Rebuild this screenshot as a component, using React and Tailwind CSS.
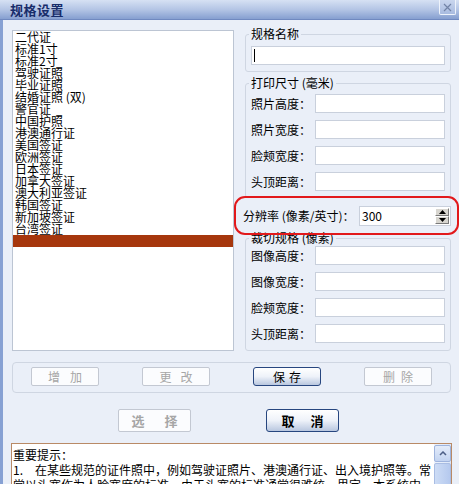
import React from 'react';

const items = ['二代证','标准1寸','标准2寸','驾驶证照','毕业证照','结婚证照 (双)','警官证','中国护照','港澳通行证','美国签证','欧洲签证','日本签证','加拿大签证','澳大利亚签证','韩国签证','新加坡签证','台湾签证'];

function Field({ label }) {
  return (
    <div className="flex items-center h-[19px]">
      <span className="w-[64px] text-[12px] leading-[12px]">{label}</span>
      <div className="w-[130px] h-[19px] bg-white border border-[#c9d0dc]" />
    </div>
  );
}

function Group({ legend, children, className = '' }) {
  return (
    <fieldset className={`border border-[#cfd6e2] rounded-[3px] pl-[3px] pr-[5px] ${className}`}>
      <legend className="px-[2px] text-[12px] leading-[12px]">{legend}</legend>
      <div className="pl-[2px]">{children}</div>
    </fieldset>
  );
}

function DisBtn({ a, b, gap, w, h, bold }) {
  return (
    <div className={`${w} ${h} flex items-center justify-center border border-[#c3c8d2] rounded-[2px] bg-[#fbfcfe] text-[#a6a6a6] ${bold ? 'font-bold text-[13px]' : 'text-[12px]'} leading-[12px]`}>
      <span>{a}</span><span className={gap}>{b}</span>
    </div>
  );
}

function EnBtn({ a, b, gap, w, h, bold }) {
  return (
    <div className={`${w} ${h} flex items-center justify-center border border-[#27467f] rounded-[3px] bg-gradient-to-b from-white via-[#eef2f9] to-[#b9c7df] text-black ${bold ? 'font-bold text-[13px]' : 'text-[12px]'} leading-[12px]`}>
      <span>{a}</span><span className={gap}>{b}</span>
    </div>
  );
}

export default function App() {
  return (
    <div className="relative w-[459px] h-[484px] overflow-hidden bg-[#eaeff8] text-black font-['Noto_Sans_CJK_SC','Noto_Sans',sans-serif]">
      {/* title bar */}
      <div className="h-[20px] flex justify-between items-start bg-gradient-to-b from-[#d6e1f3] via-[#b4c5e5] to-[#869fd0] border-b border-[#7089c0]">
        <div className="pl-[10px] pt-[2px] text-[13px] leading-[15px] font-bold text-[#172c6a] tracking-[0.5px]">规格设置</div>
        <div className="mr-[3px] w-[17px] h-[15px] border border-t-0 border-[#eef3fb] rounded-b-[2px] bg-gradient-to-b from-[#c9d6ee] to-[#a8bbe0] flex items-center justify-center">
          <svg width="9" height="9" viewBox="0 0 9 9"><path d="M1 1L8 8M8 1L1 8" stroke="#7283a6" strokeWidth="1.2" /></svg>
        </div>
      </div>

      {/* body */}
      <div className="h-[464px] border-l-[3px] border-[#87a1d3] pl-[9px]">
        <div className="flex gap-[11px] pt-[8px]">
          {/* list */}
          <div className="mt-[2px] w-[222px] h-[321px] bg-white border border-[#bcc5d3] pt-0 pl-0">
            {items.map((t) => (
              <div key={t} className="h-[12px] pl-[2px] text-[12px] leading-[12px] whitespace-nowrap">{t}</div>
            ))}
            <div className="h-[12px] bg-[#a6370d]" />
          </div>

          {/* right column */}
          <div className="w-[206px] flex flex-col">
            <Group legend="规格名称" className="pt-[6px] pb-[6px]">
              <div className="w-[194px] h-[19px] bg-white border border-[#c9d0dc] flex items-center pl-[2px]">
                <div className="w-[1px] h-[13px] bg-black" />
              </div>
            </Group>

            <Group legend="打印尺寸 (毫米)" className="mt-[5px] pt-[5px] pb-[6px]">
              <div className="flex flex-col gap-[7px]">
                <Field label="照片高度：" />
                <Field label="照片宽度：" />
                <Field label="脸颊宽度：" />
                <Field label="头顶距离：" />
              </div>
            </Group>

            <div className="mt-[8px] -ml-[2px] flex items-center h-[20px]">
              <span className="w-[116px] text-[12px] leading-[12px] whitespace-nowrap">分辨率 (像素/英寸)：</span>
              <div className="w-[92px] h-[20px] bg-white border border-[#c9d0dc] flex items-center justify-between pl-[2px] pr-[1px]">
                <span className="text-[12px] leading-[12px]">300</span>
                <div className="flex flex-col w-[14px]">
                  <div className="h-[8px] bg-[#d8d6d0] border-t border-l border-white border-r border-b border-r-[#7a7a7a] border-b-[#7a7a7a] flex items-center justify-center">
                    <svg width="7" height="4" viewBox="0 0 7 4"><path d="M3.5 0L7 4H0Z" fill="#000" /></svg>
                  </div>
                  <div className="h-[8px] bg-[#d8d6d0] border-t border-l border-white border-r border-b border-r-[#7a7a7a] border-b-[#7a7a7a] flex items-center justify-center">
                    <svg width="7" height="4" viewBox="0 0 7 4"><path d="M0 0H7L3.5 4Z" fill="#000" /></svg>
                  </div>
                </div>
              </div>
            </div>

            <Group legend="裁切规格 (像素)" className="mt-[6px] pt-[2px] pb-[7px]">
              <div className="flex flex-col gap-[7px]">
                <Field label="图像高度：" />
                <Field label="图像宽度：" />
                <Field label="脸颊宽度：" />
                <Field label="头顶距离：" />
              </div>
            </Group>
          </div>
        </div>

        {/* buttons group */}
        <div className="mt-[11px] w-[439px] h-[31px] border border-[#cfd6e2] rounded-[4px] flex items-start pt-[4px] pl-[18px] gap-[43px]">
          <DisBtn a="增" b="加" gap="ml-[10px]" w="w-[68px]" h="h-[19px]" />
          <DisBtn a="更" b="改" gap="ml-[9px]" w="w-[68px]" h="h-[19px]" />
          <EnBtn a="保" b="存" gap="ml-[4px]" w="w-[68px]" h="h-[19px]" />
          <DisBtn a="删" b="除" gap="ml-[6px]" w="w-[68px]" h="h-[19px]" />
        </div>

        <div className="mt-[16px] flex pl-[106px] gap-[75px]">
          <DisBtn a="选" b="择" gap="ml-[20px]" w="w-[73px]" h="h-[23px]" bold />
          <EnBtn a="取" b="消" gap="ml-[16px]" w="w-[73px]" h="h-[23px]" bold />
        </div>

        {/* notes */}
        <div className="mt-[11px] -ml-[1px] w-[441px] h-[60px] bg-white border border-[#b98a66] flex">
          <div className="flex-1 pl-[1px] pt-[3px] text-[12px] leading-[15px] overflow-hidden">
            <div>重要提示：</div>
            <div className="whitespace-nowrap">1.<span className="ml-[12px]">在某些规范的证件照中，例如驾驶证照片、港澳通行证、出入境护照等。常</span></div>
            <div className="whitespace-nowrap">常以头宽作为人脸宽度的标准。由于头宽的标准通常很难统一界定，本系统中</div>
          </div>
          <div className="w-[17px] pt-[1px] bg-gradient-to-r from-[#eef3fc] to-[#dbe6f8]">
            <div className="h-[17px] border border-[#9fb4dd] rounded-[2px] bg-gradient-to-b from-[#e4ecfa] to-[#c3d4f1] flex items-center justify-center">
              <svg width="8" height="5" viewBox="0 0 8 5"><path d="M1 4L4 1L7 4" stroke="#4d5f86" strokeWidth="1.5" fill="none" /></svg>
            </div>
            <div className="mt-[1px] h-[30px] border border-[#a9bde3] rounded-[2px] bg-gradient-to-r from-[#cddcf5] to-[#b5c9ee]" />
          </div>
        </div>
      </div>

      {/* red annotation */}
      <div className="absolute left-[234px] top-[196px] w-[225px] h-[39px] border-2 border-[#e2191b] rounded-[11px]" />
    </div>
  );
}
